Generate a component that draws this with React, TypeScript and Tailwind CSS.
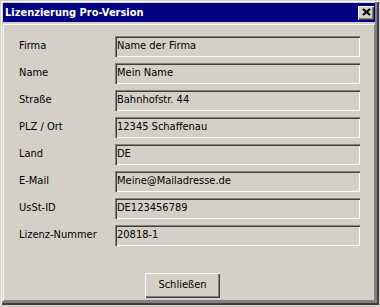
import React from "react";

const rows: [string, string][] = [
  ["Firma", "Name der Firma"],
  ["Name", "Mein Name"],
  ["Straße", "Bahnhofstr. 44"],
  ["PLZ / Ort", "12345 Schaffenau"],
  ["Land", "DE"],
  ["E-Mail", "Meine@Mailadresse.de"],
  ["UsSt-ID", "DE123456789"],
  ["Lizenz-Nummer", "20818-1"],
];

export default function App() {
  return (
    <div
      className="w-[380px] h-[307px] bg-[#d4d0c8] overflow-hidden"
      style={{ fontFamily: '"DejaVu Sans Condensed", "DejaVu Sans", sans-serif' }}
    >
      <div className="w-[379px] h-[305px] bg-[#d4d0c8] flex flex-col pl-[3px] pt-[3px] pr-[4px] pb-[4px] shadow-[inset_1px_1px_#d4d0c8,inset_2px_2px_#ffffff,inset_-2px_-2px_#404040,inset_-4px_-4px_#808080]">
        <div className="h-[19px] bg-[#000080] flex items-center justify-between pl-[2px] pr-[1px]">
          <span className="text-white font-bold text-[11px] leading-none">Lizenzierung Pro-Version</span>
          <div className="w-[16px] h-[14px] bg-[#d4d0c8] flex items-center justify-center shadow-[inset_1px_1px_#ffffff,inset_-1px_-1px_#404040,inset_-2px_-2px_#808080]">
            <svg width="9" height="8" viewBox="0 0 9 8" className="-mt-[1px]">
              <path d="M1 1 L8 7 M8 1 L1 7" stroke="#000" strokeWidth="2.2" />
            </svg>
          </div>
        </div>
        <div className="flex-1 mt-[2px] pl-[16px] pt-[12px] shadow-[inset_1px_1px_#ffffff,inset_-1px_-1px_#808080] flex flex-col">
          <div className="flex flex-col gap-[6px]">
            {rows.map(([label, value]) => (
              <div key={label} className="flex items-center h-[21px]">
                <div className="w-[96px] text-[11px] text-black">{label}</div>
                <div className="w-[245px] h-[21px] flex items-center pl-[2px] text-[11px] text-black bg-[#d4d0c8] shadow-[inset_1px_1px_#808080,inset_2px_2px_#404040,inset_-1px_-1px_#ffffff,inset_-2px_-2px_#d4d0c8]">
                  {value}
                </div>
              </div>
            ))}
          </div>
          <div className="mt-[27px] pl-[126px]">
            <div className="w-[75px] h-[25px] flex items-center justify-center text-[11px] text-black shadow-[inset_1px_1px_#ffffff,inset_-1px_-1px_#404040,inset_-2px_-2px_#808080]">
              Schließen
            </div>
          </div>
        </div>
      </div>
    </div>
  );
}
